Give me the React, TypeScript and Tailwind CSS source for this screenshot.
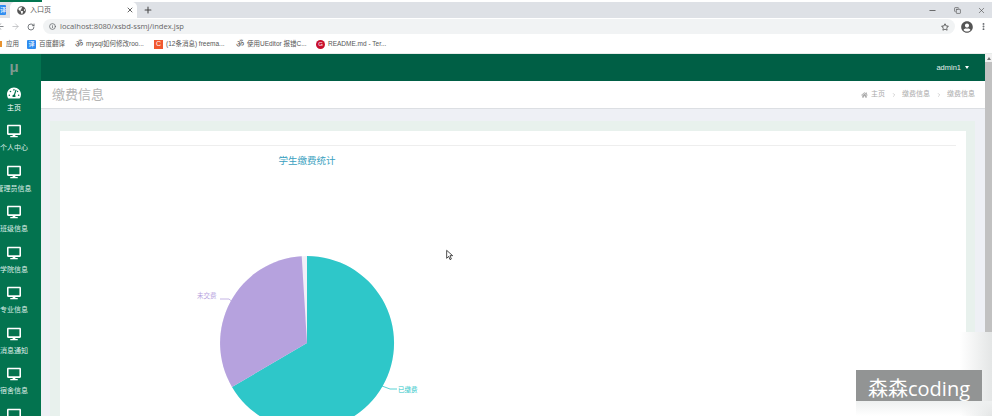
import { FaDesktop, FaHome, FaTachometerAlt, FaRegStar, FaUserCircle, FaGlobeAmericas } from "react-icons/fa";
import { ArrowLeft, ArrowRight, Info, Minus, Plus, RotateCw, X, Copy, EllipsisVertical, ChevronRight } from "lucide-react";

const menu = ["个人中心", "管理员信息", "班级信息", "学院信息", "专业信息", "消息通知", "宿舍信息", ""];

const bookmarks = [
  { label: "百度翻译", icon: <span className="flex h-[9px] w-[9px] items-center justify-center rounded-[1px] bg-[#2f8cf0] text-[6px] text-white">译</span>, w: "w-[48px]" },
  { label: "mysql如何修改roo...", icon: <span className="text-[9px] leading-none text-[#555]">ॐ</span>, w: "w-[79px]" },
  { label: "(12条消息) freema...", icon: <span className="flex h-[9px] w-[9px] items-center justify-center bg-[#f1582f] text-[7px] text-white">C</span>, w: "w-[82px]" },
  { label: "使用UEditor 报错C...", icon: <span className="text-[9px] leading-none text-[#555]">ॐ</span>, w: "w-[80px]" },
  { label: "README.md - Ter...", icon: <span className="flex h-[9px] w-[9px] items-center justify-center rounded-full bg-[#c8102e] text-[6px] text-white">G</span>, w: "w-[80px]" },
];

function BrowserBar() {
  return (
    <div className="flex flex-col shrink-0 bg-white">
      <div className="h-[2px] bg-white">
        <div className="h-full w-[42px] bg-[#037651]" />
      </div>
      <div className="flex h-[16px] items-stretch bg-[#dee1e6] text-[#444]">
        <div className="flex w-[10px] items-center bg-[#dee1e6]">
          <span className="flex h-[10px] w-[6px] items-center justify-end rounded-r-[1px] bg-[#2f8cf0] text-[6px] text-white">译</span>
        </div>
        <div className="flex w-[127px] items-center rounded-t-[5px] bg-white pl-[7px] pr-[3px]">
          <FaGlobeAmericas className="h-[9px] w-[9px] text-[#555]" />
          <span className="ml-[4px] flex-1 text-[7px] text-[#555]">入口页</span>
          <X className="h-[8px] w-[8px]" strokeWidth={2.5} />
        </div>
        <div className="flex w-[22px] items-center justify-center">
          <Plus className="h-[10px] w-[10px]" strokeWidth={2.5} />
        </div>
        <div className="ml-auto flex w-[64px] items-center justify-between pr-[6px]">
          <Minus className="h-[9px] w-[9px]" strokeWidth={2} />
          <Copy className="h-[7px] w-[7px]" strokeWidth={2} />
          <X className="h-[9px] w-[9px]" strokeWidth={1.5} />
        </div>
      </div>
      <div className="flex h-[17px] items-center bg-white pr-[4px] text-[#5f6368]">
        <ArrowLeft className="ml-[-4px] h-[9px] w-[9px]" />
        <ArrowRight className="ml-[6px] h-[9px] w-[9px] text-[#b5b7ba]" />
        <RotateCw className="ml-[7px] h-[8px] w-[8px]" strokeWidth={2.5} />
        <div className="ml-[8px] flex h-[15px] flex-1 items-center rounded-full bg-[#f1f3f4] pl-[6px] pr-[6px]">
          <Info className="h-[7px] w-[7px]" strokeWidth={2.5} />
          <span className="ml-[4px] font-['Open_Sans',sans-serif] text-[7.6px] leading-none text-[#666]">
            localhost:8080/xsbd-ssmj/index.jsp
          </span>
          <FaRegStar className="ml-auto h-[8px] w-[8px] text-[#444]" />
        </div>
        <FaUserCircle className="ml-[6px] h-[12px] w-[12px] text-[#555]" />
        <EllipsisVertical className="ml-[6px] h-[9px] w-[9px]" strokeWidth={3} />
      </div>
      <div className="flex h-[18px] items-center bg-white text-[6.5px] text-[#555]">
        <span className="ml-[-2px] h-[6px] w-[4px] bg-[#e8912d]" />
        <span className="ml-[4px] w-[21px]">应用</span>
        {bookmarks.map((b) => (
          <div key={b.label} className={`flex items-center gap-[3px] whitespace-nowrap ${b.w}`}>
            {b.icon}
            <span>{b.label}</span>
          </div>
        ))}
      </div>
    </div>
  );
}

function Sidebar() {
  return (
    <div className="flex w-[41px] shrink-0 flex-col overflow-hidden bg-[#03734f] text-white">
      <div className="flex h-[27px] w-[28px] shrink-0 items-center justify-center text-[15px] font-bold text-[#7f9a8f]">μ</div>
      <div className="flex h-[37px] w-[28px] shrink-0 flex-col items-center pt-[5px]">
        <FaTachometerAlt className="h-[14px] w-[14px]" />
        <span className="mt-[2.5px] whitespace-nowrap text-[7px] leading-[10px]">主页</span>
      </div>
      {menu.map((m, i) => (
        <div key={i} className="flex h-[40.5px] w-[28px] shrink-0 flex-col items-center pt-[6px]">
          <FaDesktop className="h-[14px] w-[14px]" />
          <span className="mt-[5px] whitespace-nowrap text-[7px] leading-[10px] text-[#dfeee8]">{m}</span>
        </div>
      ))}
    </div>
  );
}

function Pie() {
  return (
    <svg viewBox="0 0 240 200" className="h-[200px] w-[240px]">
      <circle cx="120" cy="112" r="87" fill="#f1eff8" />
      <path d="M120 112 L120 25 A87 87 0 1 1 45 156 Z" fill="#2ec7c9" />
      <path d="M120 112 L45 156 A87 87 0 0 1 114.7 25.2 Z" fill="#b6a2de" />
      <path d="M33 68 L42 68 L48 73" fill="none" stroke="#b6a2de" strokeWidth="0.8" />
      <path d="M195 155 L203 158 L210 158" fill="none" stroke="#2ec7c9" strokeWidth="0.8" />
      <text x="10" y="67" fontSize="6.5" fill="#b6a2de">未交费</text>
      <text x="211" y="161" fontSize="6.5" fill="#2ec7c9">已缴费</text>
    </svg>
  );
}

export default function App() {
  return (
    <div className="relative flex h-[416px] w-[992px] flex-col overflow-hidden bg-white font-['Liberation_Sans','Noto_Sans_CJK_SC',sans-serif]">
      <BrowserBar />
      <div className="flex min-h-0 flex-1 border-t border-[#e8ecea]">
        <Sidebar />
        <div className="flex min-w-0 flex-1 flex-col bg-[#eef0f5]">
          <div className="flex h-[27px] shrink-0 items-center justify-end bg-[#005f45] pr-[16px] text-[7.5px] text-[#e6efec]">
            admin1
            <span className="ml-[4px] h-0 w-0 border-x-[2.5px] border-t-[3px] border-x-transparent border-t-white" />
          </div>
          <div className="flex h-[28px] shrink-0 items-center border-b border-[#dcdfe3] bg-white pl-[11px] pr-[10px]">
            <h1 className="text-[13px] text-[#b4b4b4]">缴费信息</h1>
            <div className="ml-auto flex items-center text-[7px] text-[#aaa]">
              <FaHome className="mr-[3px] h-[6px] w-[7px]" />
              主页
              <ChevronRight className="mx-[5.5px] h-[6px] w-[6px]" />
              缴费信息
              <ChevronRight className="mx-[5.5px] h-[6px] w-[6px]" />
              缴费信息
            </div>
          </div>
          <div className="min-h-0 flex-1 pl-[9px] pr-[10px] pt-[12px]">
            <div className="h-[400px] bg-[#e8f1ed] p-[10px] pr-[9px]">
              <div className="h-full bg-white px-[10px] pt-[14px]">
                <div className="border-t border-[#eeeeee] pt-[9px]">
                  <div className="w-[474px] text-center text-[9.5px] leading-[12px] text-[#3a9fc0]">学生缴费统计</div>
                  <div className="ml-[117px] mt-[64px]">
                    <Pie />
                  </div>
                </div>
              </div>
            </div>
          </div>
        </div>
        <div className="flex w-[7px] shrink-0 flex-col bg-[#f1f1f1]">
          <div className="flex h-[8px] items-center justify-center">
            <span className="h-0 w-0 border-x-[2px] border-b-[3px] border-x-transparent border-b-[#777]" />
          </div>
          <div className="flex-1 bg-[#c1c1c1]" />
        </div>
      </div>
      <svg viewBox="0 0 12 16" className="absolute left-[446px] top-[249px] h-[12px] w-[8px]">
        <path d="M1 1 L1 13 L4 10 L6 15 L8 14 L6 9 L10 9 Z" fill="white" stroke="#222" strokeWidth="1.2" />
      </svg>
      <div className="absolute left-[960px] top-[332px] h-[84px] w-[32px] bg-gradient-to-r from-white to-[#e4e6e6]" />
      <div className="absolute left-[856px] top-[401px] h-[15px] w-[136px] bg-gradient-to-b from-[#eef0f0] to-white/0" />
      <div className="absolute left-[856px] top-[370px] flex h-[31px] w-[126px] items-end justify-center overflow-hidden bg-[#929494] text-[20px] leading-[24px] text-white font-['Open_Sans','Noto_Sans_CJK_SC',sans-serif]">
        森森coding
      </div>
    </div>
  );
}
